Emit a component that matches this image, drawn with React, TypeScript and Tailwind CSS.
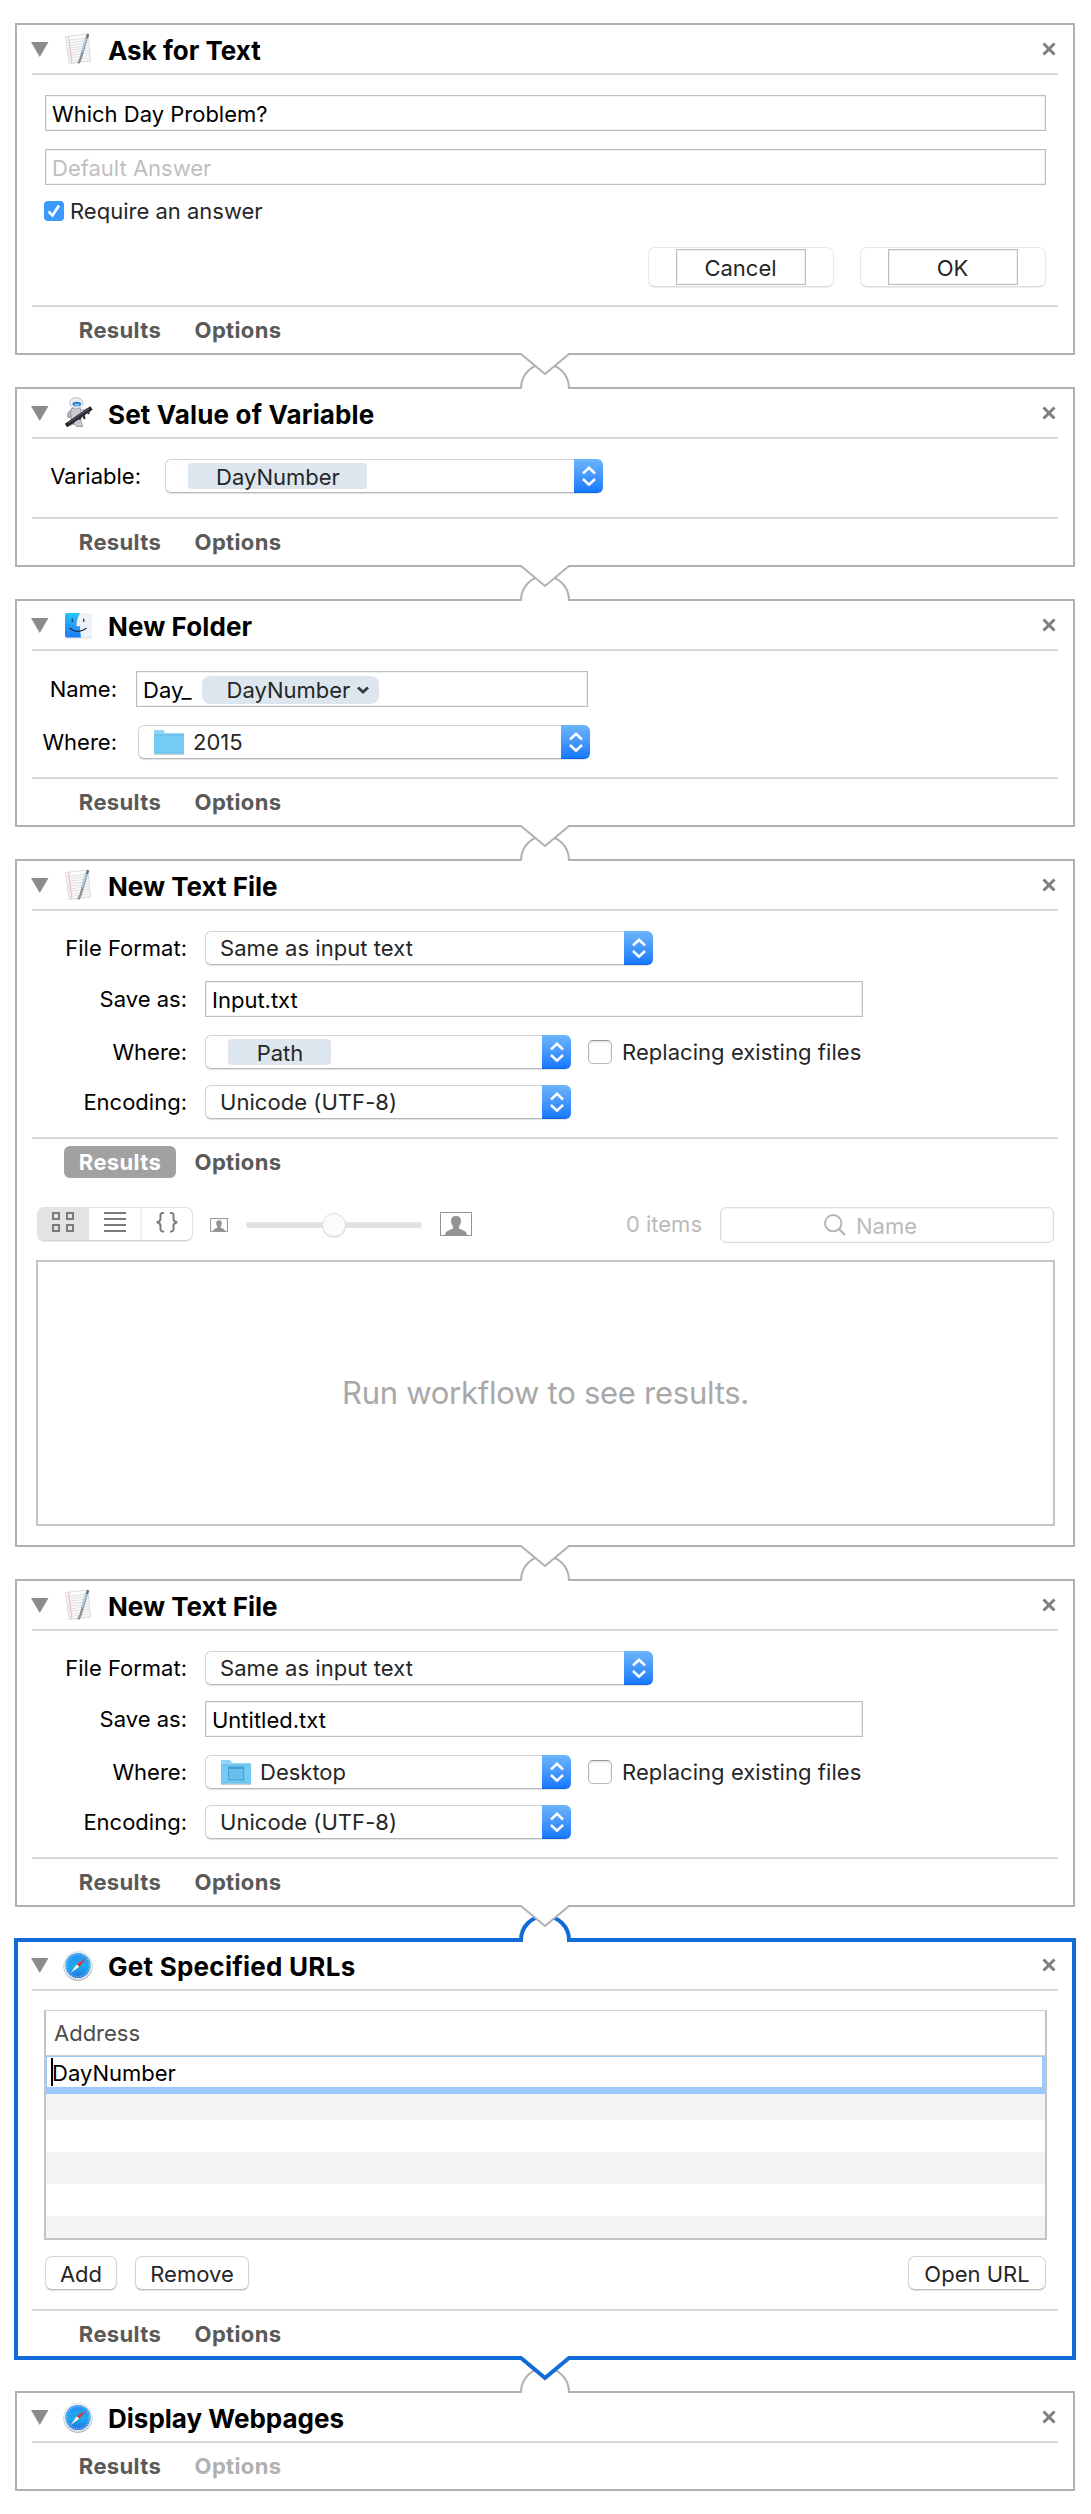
import { useId, type ReactNode } from "react";

function TextEditIcon() {
  return (
    <svg width="32" height="32" viewBox="0 0 32 32" className="block">
      <path d="M3.5 4.5L26 1.2L28.6 28.6L7.2 31Z" fill="#d0d0d0" opacity=".6" />
      <path d="M3.5 3.6L26 .8L28.4 27.8L7 30.2Z" fill="#fbfbfb" stroke="#d4d4d4" strokeWidth=".8" />
      <g stroke="#d8d8d8" strokeWidth=".8">
        <path d="M5 7.5L25.5 5M5.3 10L25.8 7.5M5.5 12.5L26 10M5.8 15L26.2 12.5M6 17.5L26.5 15M6.3 20L26.8 17.5M6.6 22.5L27 20M6.8 25L27.4 22.5M7 27.5L27.6 25" />
      </g>
      <path d="M6.6 3.4L9.8 29.6" stroke="#f6b9bb" strokeWidth="1.1" />
      <path d="M25.8 1.2L18.4 26.4L16.2 30.4" stroke="#8b9299" strokeWidth="2.4" fill="none" />
      <path d="M24.4 4L19.8 18.5" stroke="#a9cfe9" strokeWidth="2" />
      <path d="M26.3 1.2L25 5" stroke="#6e7478" strokeWidth="2" />
    </svg>
  );
}

function AutomatorIcon() {
  return (
    <svg width="32" height="32" viewBox="0 0 32 32" className="block">
      <path d="M9 13Q5 15 5.5 20L8 21L10 17ZM19 13L25 14L26 11L29 10" fill="#b5b6bd" stroke="#8e8f98" strokeWidth=".8" />
      <path d="M9.5 11.5Q14 9.5 18.5 11.5Q20.5 16 17.5 20L19.5 25L20.5 29.5H14.5L12 27L8 28.5L9.5 21Q7.5 16 9.5 11.5Z" fill="#c9cad0" stroke="#8c8d96" strokeWidth=".8" />
      <ellipse cx="14.3" cy="6" rx="6.6" ry="5.4" fill="#eceef2" stroke="#aeb0b8" strokeWidth=".8" />
      <ellipse cx="14.8" cy="7" rx="4.3" ry="2.3" fill="#2d7fd0" />
      <ellipse cx="14.8" cy="7.7" rx="2.4" ry="1" fill="#7fd0fa" />
      <path d="M4 28.5L29.5 11" stroke="#25252e" strokeWidth="4" />
      <path d="M10.5 26.5L13.5 22M17 22.5L19.5 19M21.5 17L22.5 22M25.5 14L27 17" stroke="#33333d" strokeWidth="2.2" />
      <path d="M6 26.2L27 11.8" stroke="#6d6e79" strokeWidth=".8" />
    </svg>
  );
}

function FinderIcon() {
  const id = useId();
  return (
    <svg width="32" height="32" viewBox="0 0 32 32" className="block">
      <defs>
        <linearGradient id={id} x1="0" y1="0" x2="0" y2="1">
          <stop offset="0" stopColor="#22c6fb" />
          <stop offset="1" stopColor="#1f7bf2" />
        </linearGradient>
      </defs>
      <rect x="3" y="5" width="27" height="24.5" rx="2" fill="#cfcfd4" opacity=".7" />
      <rect x="3" y="4" width="27" height="24.5" rx="2" fill="#eef2f7" />
      <path d="M5 4H17.5Q14 10.5 14 17.5H18Q18 23 19 28.5H5Q3 28.5 3 26.5V6Q3 4 5 4Z" fill={`url(#${id})`} />
      <path d="M10.3 10V12.5M21.7 10V12.5" stroke="#1c2c4a" strokeWidth="1.2" strokeLinecap="round" />
      <path d="M8 19.3Q15.5 25.8 24.3 19.3" fill="none" stroke="#1c2c4a" strokeWidth="1.2" strokeLinecap="round" />
      <path d="M17.5 4Q14 10.5 14 17.5H18" fill="none" stroke="#2b67b8" strokeWidth=".4" />
    </svg>
  );
}

function SafariIcon() {
  const id = useId();
  return (
    <svg width="32" height="32" viewBox="0 0 32 32" className="block">
      <defs>
        <linearGradient id={id} x1="0" y1="0" x2="0" y2="1">
          <stop offset="0" stopColor="#2a8ef0" />
          <stop offset=".55" stopColor="#1eaaee" />
          <stop offset="1" stopColor="#1f6fe0" />
        </linearGradient>
      </defs>
      <circle cx="16" cy="17.2" r="14.5" fill="#a4a4a8" />
      <circle cx="16" cy="16.5" r="14.5" fill="#dededf" />
      <circle cx="16" cy="16.2" r="14" fill="#ececee" />
      <circle cx="16" cy="16.5" r="12.6" fill={`url(#${id})`} />
      <circle cx="16" cy="16.5" r="11.3" fill="none" stroke="#9fd2fb" strokeWidth="1.6" strokeDasharray=".8 1.566" />
      <path d="M24 9.5L17.3 17.8L14.7 15.2Z" fill="#e8332d" />
      <path d="M8.5 24L17.3 17.8L14.7 15.2Z" fill="#f2f4f6" />
    </svg>
  );
}

function Folder({ desktop = false }: { desktop?: boolean }) {
  return (
    <svg width="32" height="26" viewBox="0 0 32 26" className="block shrink-0">
      <path d="M1 25.2H31" stroke="#a9b9c2" strokeWidth="1" />
      <path d="M1 2Q1 1 2 1H9.5Q10.5 1 11 2L12 4H30Q31 4 31 5V8H1Z" fill="#8fd3f6" />
      <path d="M1 6H31V23.5Q31 24.5 30 24.5H2Q1 24.5 1 23.5Z" fill="#74cbf5" />
      <path d="M1 6H31M1 24H31" stroke="#5eb5e2" strokeWidth=".8" />
      {desktop && (
        <>
          <rect x="8.7" y="8" width="15" height="13" fill="#69c0ec" stroke="#3f9fd0" strokeWidth="1" />
          <path d="M9 9H23.5" stroke="#3f9fd0" strokeWidth="2" />
        </>
      )}
    </svg>
  );
}

function Person({ large = false }: { large?: boolean }) {
  return (
    <svg
      width={large ? 32 : 18}
      height={large ? 24 : 14}
      viewBox="0 0 32 24"
      preserveAspectRatio="none"
      className="block shrink-0"
    >
      <rect
        x={large ? 0.5 : 1}
        y={large ? 0.5 : 1}
        width={large ? 31 : 30}
        height={large ? 23 : 22}
        fill="#fff"
        stroke="#939393"
        strokeWidth={large ? 1 : 1.7}
      />
      <path
        d="M5 23Q5.2 19.5 8.5 18.5L13 16.5V14.5Q11.3 12.5 11 9.5Q10.8 4 16 4Q21.2 4 21 9.5Q20.7 12.5 19 14.5V16.5L23.5 18.5Q26.8 19.5 27 23Z"
        fill="#939393"
      />
    </svg>
  );
}

function Tab({ children, active = false, disabled = false }: { children: ReactNode; active?: boolean; disabled?: boolean }) {
  const tone = active ? "bg-[#a1a1a1] text-white" : disabled ? "text-[#b0b0b0]" : "text-[#595959]";
  return (
    <button className={`flex h-8 w-28 items-center justify-center rounded-md font-bold tracking-[0.35px] ${tone}`}>
      {children}
    </button>
  );
}

type CardProps = {
  title: string;
  icon: ReactNode;
  children?: ReactNode;
  results?: ReactNode;
  selected?: boolean;
  first?: boolean;
  last?: boolean;
  titleClass?: string;
};

function Card({ title, icon, children, results, selected, first, last, titleClass = "" }: CardProps) {
  const stroke = selected ? "#116cd9" : "#b1b1b1";
  const width = selected ? 4 : 2;
  return (
    <section
      className={`relative border-2 bg-white ${
        selected
          ? "border-[#116cd9] shadow-[0_0_0_1px_#116cd9,inset_0_0_0_1px_#116cd9]"
          : "border-[#b1b1b1]"
      }`}
    >
      {!first && (
        <svg width="54" height="30" className="absolute -top-7 left-1/2 -translate-x-1/2">
          <path
            d={selected ? "M3 29V27A24 24 0 0 1 51 27V29" : "M3 28V27A24 24 0 0 1 51 27V28"}
            fill="#fff"
            stroke={stroke}
            strokeWidth={width}
          />
        </svg>
      )}
      {!last && (
        <svg width="54" height="30" className="absolute -bottom-[26px] left-1/2 z-10 -translate-x-1/2">
          <path d="M3 5V2H51V5L27 25Z" fill="#fff" />
          <path d="M2.5 5H3L27 25L51 5H51.5" fill="none" stroke={stroke} strokeWidth={width} />
        </svg>
      )}
      <header className="relative mx-[15px] flex h-[50px] items-start border-b-2 border-[#d8d8d8] pt-2">
        <svg width="18" height="15" className="mt-[9px] -ml-[1.5px] shrink-0">
          <path d="M0 0H17.5L8.75 15Z" fill="#8c8c8c" />
        </svg>
        <div className="ml-[13.5px] shrink-0">{icon}</div>
        <h2 className={`mt-[2px] ml-[14px] text-[26px] leading-8 font-bold text-black ${titleClass}`}>{title}</h2>
        <svg width="14" height="14" viewBox="0 0 14 14" className="mt-[9px] mr-[2px] ml-auto">
          <path d="M1.5 1.5L12.5 12.5M12.5 1.5L1.5 12.5" stroke="#808080" strokeWidth="3" />
        </svg>
      </header>
      {children && <div className="mx-[15px] border-b-2 border-[#d8d8d8] px-[13px] pt-5">{children}</div>}
      <footer className="flex h-[46px] items-center gap-1.5 pl-[47px]">
        <Tab active={!!results}>Results</Tab>
        <Tab disabled={last}>Options</Tab>
      </footer>
      {results}
    </section>
  );
}

function Field({ children, className = "text-black" }: { children: ReactNode; className?: string }) {
  return (
    <div
      className={`flex h-9 items-center border border-[#bebebe] bg-white pt-[1px] pl-1.5 shadow-[inset_0_0_0_1px_#f0f0f0] ${className}`}
    >
      {children}
    </div>
  );
}

function Select({ children, className = "" }: { children: ReactNode; className?: string }) {
  return (
    <div className={`flex h-[34px] rounded-[6px] shadow-[0_1px_1px_#0000001f] ${className}`}>
      <div className="flex min-w-0 flex-1 items-center rounded-l-[6px] border border-r-0 border-[#d2d2d2] border-b-[#b9b9b9] bg-white text-[#262626]">
        {children}
      </div>
      <div className="flex w-[29px] items-center justify-center rounded-r-[6px] border-b border-[#0f63ee] bg-gradient-to-b from-[#6db4f9] to-[#1479ff]">
        <svg width="14" height="20" viewBox="0 0 14 20" fill="none" stroke="#fff" strokeWidth="2.5">
          <path d="M1 7.5L7 1.8L13 7.5M1 13L7 18.7L13 13" />
        </svg>
      </div>
    </div>
  );
}

function Token({ children, className = "" }: { children: ReactNode; className?: string }) {
  return (
    <span
      className={`flex h-[26px] items-center justify-center rounded bg-[#dde6ef] pt-[2px] pl-[1px] text-[#262626] ${className}`}
    >
      {children}
    </span>
  );
}

function Row({ label, labelClass, children, className = "" }: { label: string; labelClass: string; children: ReactNode; className?: string }) {
  return (
    <div className={`flex items-center ${className}`}>
      <span className={`shrink-0 pb-[1px] text-right text-black ${labelClass}`}>{label}</span>
      {children}
    </div>
  );
}

function PushButton({ children, className }: { children: ReactNode; className: string }) {
  return (
    <button
      className={`flex h-[34px] items-center justify-center rounded-[7px] border border-[#d3d3d3] border-b-[#bdbdbd] bg-white pt-[1px] text-[#262626] shadow-[0_1px_1px_#0000001f] ${className}`}
    >
      {children}
    </button>
  );
}

function PromptButton({ children }: { children: ReactNode }) {
  return (
    <div className="flex h-10 w-[186px] items-center justify-center rounded-[7px] border border-[#e8e8e8] border-b-[#dadada] bg-white shadow-[0_1px_1px_#00000012]">
      <div className="flex h-9 w-[130px] items-center justify-center border border-[#bebebe] pt-[1px] pr-[1px] text-[#262626] shadow-[inset_0_0_0_1px_#f0f0f0]">
        {children}
      </div>
    </div>
  );
}

function TextFileForm({ name, where }: { name: string; where: ReactNode }) {
  const label = "-ml-3.5 mr-[18px] w-[156px]";
  return (
    <div className="flex flex-col pb-[18px]">
      <Row label="File Format:" labelClass={label}>
        <Select className="w-[448px]">
          <span className="pl-3.5 tracking-[0.05px]">Same as input text</span>
        </Select>
      </Row>
      <Row label="Save as:" labelClass={label} className="mt-4">
        <Field className="w-[658px] text-black">{name}</Field>
      </Row>
      <Row label="Where:" labelClass={label} className="mt-[18px]">
        <Select className="w-[366px]">{where}</Select>
        <span className="ml-[17px] size-6 rounded-[5px] border border-[#b9b9b9] border-t-[#999] bg-white shadow-[inset_0_1px_2px_#00000026]" />
        <span className="ml-[10px] tracking-[0.05px] text-[#262626]">Replacing existing files</span>
      </Row>
      <Row label="Encoding:" labelClass={label} className="mt-4">
        <Select className="w-[366px]">
          <span className="pl-3.5 tracking-[0.05px]">Unicode (UTF-8)</span>
        </Select>
      </Row>
    </div>
  );
}

function ResultsPane() {
  return (
    <div className="pt-[22px] pr-[18px] pb-[19px] pl-[19px]">
      <div className="flex h-9 items-start pr-[1px]">
        <div className="ml-px flex h-[34px] w-[156px] overflow-hidden rounded-[7px] border border-[#e2e2e2] border-b-[#d2d2d2] bg-white shadow-[0_1px_1px_#00000014]">
          <div className="flex w-[51px] justify-center bg-[#e3e3e3] pt-1">
            <svg width="22" height="22" viewBox="0 0 22 22" className="-ml-[2px]" fill="none" stroke="#7b7b7b" strokeWidth="2">
              <path d="M1 1H7V7H1ZM15 1H21V7H15ZM1 13H7V19H1ZM15 13H21V19H15Z" />
            </svg>
          </div>
          <div className="flex w-[53px] justify-center border-r-2 border-[#efefef] pt-1 pl-[1px]">
            <svg width="22" height="22" viewBox="0 0 22 22" stroke="#7b7b7b" strokeWidth="2">
              <path d="M0 1H22M0 7H22M0 13H22M0 19H22" />
            </svg>
          </div>
          <div className="flex flex-1 justify-center pt-1">
            <svg width="22" height="22" viewBox="0 0 22 22" fill="none" stroke="#7b7b7b" strokeWidth="2">
              <path d="M8 1Q4 .5 4.5 4V7Q4.500 9.500 .8 10.200Q4.500 11 4.500 13.500V16Q4 20 8 19.500M14 1Q18 .5 17.500 4V7Q17.500 9.500 21.200 10.200Q17.500 11 17.500 13.500V16Q18 20 14 19.500" />
            </svg>
          </div>
        </div>
        <div className="mt-[11px] ml-[17px]">
          <Person />
        </div>
        <div className="relative mt-[15px] ml-[18px] h-1.5 w-[176px] rounded-full bg-[#e2e2e2]">
          <span className="absolute -top-[9px] left-[76px] size-6 rounded-full border border-[#dedede] bg-[#fbfbfb] shadow-[0_1px_1px_#0000001a]" />
        </div>
        <div className="mt-[5px] ml-[18px]">
          <Person large />
        </div>
        <span className="ml-auto leading-[34px] text-[#bababa]">0 items</span>
        <div className="ml-[18px] flex h-9 w-[334px] items-center rounded-[6px] border border-[#dcdcdc] pl-[103px] text-[#bababa] shadow-[inset_0_0_0_1px_#f4f4f4]">
          <svg width="22" height="22" viewBox="0 0 22 22" fill="none" stroke="#b4b4b4" strokeWidth="1.8">
            <circle cx="9.2" cy="9.2" r="8.2" />
            <path d="M15 15L21 21" strokeWidth="2.2" />
          </svg>
          <span className="ml-[10px] pt-[2px]">Name</span>
        </div>
      </div>
      <div className="mt-[17px] flex h-[266px] items-center justify-center border-2 border-[#c5c5c5] text-[31px] tracking-[-0.26px] text-[#a8a8a8]">
        Run workflow to see results.
      </div>
    </div>
  );
}

export default function App() {
  return (
    <main className="flex min-h-[2514px] w-[1091px] flex-col gap-8 bg-white pt-[23px] pr-4 pl-[15px] font-['Inter',sans-serif] text-[22px] leading-7 whitespace-nowrap">
      <Card title="Ask for Text" icon={<TextEditIcon />} first>
        <div className="flex flex-col pb-[18px]">
          <Field className="-mr-[1px] text-black">Which Day Problem?</Field>
          <Field className="mt-[18px] -mr-[1px] text-[#bfbfbf]">Default Answer</Field>
          <label className="mt-4 flex h-5 items-center text-[#262626]">
            <span className="-ml-px flex size-5 items-center justify-center rounded bg-[#3b99fc]">
              <svg width="14" height="14" viewBox="0 0 14 14" fill="none" stroke="#fff" strokeWidth="2.6">
                <path d="M1.5 7.5L5.5 11.5L12 1.5" />
              </svg>
            </span>
            <span className="ml-1.5 pb-[1px]">Require an answer</span>
          </label>
          <div className="mt-[26px] -mr-[1px] flex justify-end gap-[26px]">
            <PromptButton>Cancel</PromptButton>
            <PromptButton>OK</PromptButton>
          </div>
        </div>
      </Card>

      <Card title="Set Value of Variable" icon={<AutomatorIcon />} titleClass="tracking-[0.15px]">
        <Row label="Variable:" labelClass="-ml-px w-[97px] mr-6" className="pb-6">
          <Select className="w-[438px]">
            <Token className="ml-[22px] w-[179px]">DayNumber</Token>
          </Select>
        </Row>
      </Card>

      <Card title="New Folder" icon={<FinderIcon />} titleClass="tracking-[0.1px]">
        <div className="flex flex-col pb-[18px]">
          <Row label="Name:" labelClass="-ml-3.5 w-[86px] mr-[19px]">
            <Field className="w-[452px] text-black">
              Day_
              <span className="ml-[10px] flex h-7 w-[177px] items-center rounded-lg bg-[#dde6ef] pt-[1px] pl-[25px] text-[#262626]">
                DayNumber
                <svg width="12" height="8" viewBox="0 0 12 8" fill="none" stroke="#3a3a3a" strokeWidth="2.8" className="ml-[7px]">
                  <path d="M1 1.5L6 6L11 1.5" />
                </svg>
              </span>
            </Field>
          </Row>
          <Row label="Where:" labelClass="-ml-3.5 w-[86px] mr-[21px]" className="mt-[18px]">
            <Select className="w-[452px]">
              <span className="ml-3.5">
                <Folder />
              </span>
              <span className="ml-2">2015</span>
            </Select>
          </Row>
        </div>
      </Card>

      <Card title="New Text File" icon={<TextEditIcon />} results={<ResultsPane />}>
        <TextFileForm name="Input.txt" where={<Token className="ml-[22px] w-[103px]">Path</Token>} />
      </Card>

      <Card title="New Text File" icon={<TextEditIcon />}>
        <TextFileForm
          name="Untitled.txt"
          where={
            <>
              <span className="ml-3.5">
                <Folder desktop />
              </span>
              <span className="ml-2">Desktop</span>
            </>
          }
        />
      </Card>

      <Card title="Get Specified URLs" icon={<SafariIcon />} selected titleClass="tracking-[0.25px]">
        <div className="-mt-px pb-[19px]">
          <div className="-mr-[2px] -ml-px h-[230px] overflow-hidden border-2 border-t border-[#c4c4c4] border-t-[#d0d0d0]">
            <div className="flex h-[45px] items-center border-b border-[#cfcfcf] pb-[1px] pl-2 text-[#4d4d4d]">Address</div>
            <div className="relative flex h-[38px] items-center border-t border-r-[3px] border-b-[7px] border-l border-[#9dc8fa] bg-white pt-[1px] pl-[5px] text-black">
              <span className="absolute top-[1px] left-[4px] h-7 w-[2px] bg-black" />
              DayNumber
            </div>
            <div className="h-[26px] bg-[#f4f4f4]" />
            <div className="h-8 bg-white" />
            <div className="h-8 bg-[#f4f4f4]" />
            <div className="h-8 bg-white" />
            <div className="h-[22px] bg-[#f4f4f4]" />
          </div>
          <div className="mt-4 -mr-[1px] flex">
            <PushButton className="w-[72px]">Add</PushButton>
            <PushButton className="ml-[18px] w-[114px]">Remove</PushButton>
            <PushButton className="ml-auto w-[138px]">Open URL</PushButton>
          </div>
        </div>
      </Card>

      <Card title="Display Webpages" icon={<SafariIcon />} last />
    </main>
  );
}
